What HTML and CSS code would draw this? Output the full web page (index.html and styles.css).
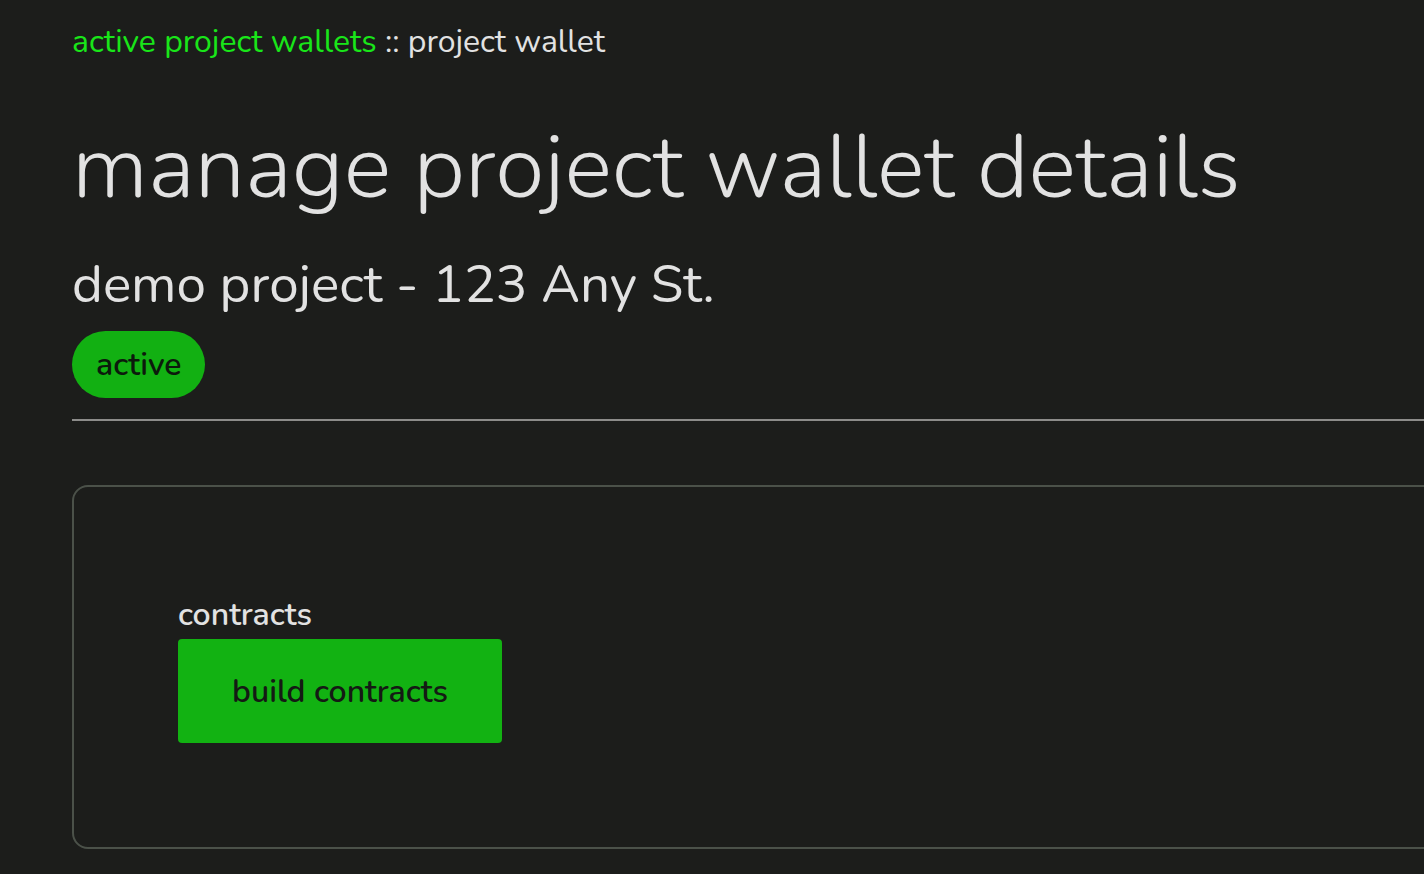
FILE: index.html
```html
<!DOCTYPE html>
<html lang="en">
<head>
  <meta charset="UTF-8">
  <meta name="viewport" content="width=device-width, initial-scale=1.0">
  <title>Project Wallet</title>
  <link rel="stylesheet" href="styles.css">
</head>
<body>

<div class="page">
  <!-- Breadcrumb -->
  <nav class="crumbs">
    <a href="#" class="crumb-link">active project wallets</a> :: project wallet
  </nav>

  <h1 class="title">manage project wallet details</h1>
  <h2 class="subtitle">demo project - 123 Any St.</h2>
  <div class="status-row">
    <span class="status">active</span>
  </div>

  <hr class="divider">

  <!-- Wallet actions -->
  <div class="panel">
    <div class="field">
      <label class="field-label">contracts</label>
      <button type="button" class="action-button">build contracts</button>
    </div>
  </div>
</div>

</body>
</html>
```

FILE: styles.css
```css
/* Dark wallet page */
html, body {
  margin: 0;
  background-color: #1c1d1b;
  overflow: hidden;
}

body {
  font-family: "Nunito", "Lato", "Noto Sans", sans-serif;
  color: #e2e2e2;
}

.page {
  width: 1440px;
  padding: 18px 0 0 72px;
}

.crumbs {
  font-size: 32px;
  line-height: 48px;
}

.crumb-link {
  color: #19e619;
  text-decoration: none;
}

.title {
  margin: 53px 0 0;
  font-size: 89.7px;
  font-weight: 300;
  line-height: 1.1;
}

.subtitle {
  margin: 35px 0 0;
  font-size: 53px;
  font-weight: 400;
  line-height: 1.2;
}

.status-row {
  display: flex;
  margin-top: 15px;
}

.status {
  padding: 0 24px;
  height: 67px;
  line-height: 67px;
  border-radius: 34px;
  background-color: #12b012;
  color: #0c1a0c;
  font-size: 32px;
  font-weight: 600;
}

.divider {
  margin: 21px 0 0;
  border: 0;
  border-top: 2px solid #8c8c8a;
}

.panel {
  margin-top: 64px;
  height: 364px;
  border: 2px solid #4b5149;
  border-radius: 16px;
  box-sizing: border-box;
  padding: 108px 0 0 104px;
}

.field-label {
  display: block;
  font-size: 32px;
  font-weight: 600;
  line-height: 40px;
  color: #e2e2e2;
}

.action-button {
  display: block;
  margin-top: 4px;
  width: 324px;
  height: 104px;
  border: none;
  border-radius: 4px;
  background-color: #12b212;
  color: #141a14;
  font-family: inherit;
  font-size: 32px;
  font-weight: 600;
  cursor: pointer;
}
```
